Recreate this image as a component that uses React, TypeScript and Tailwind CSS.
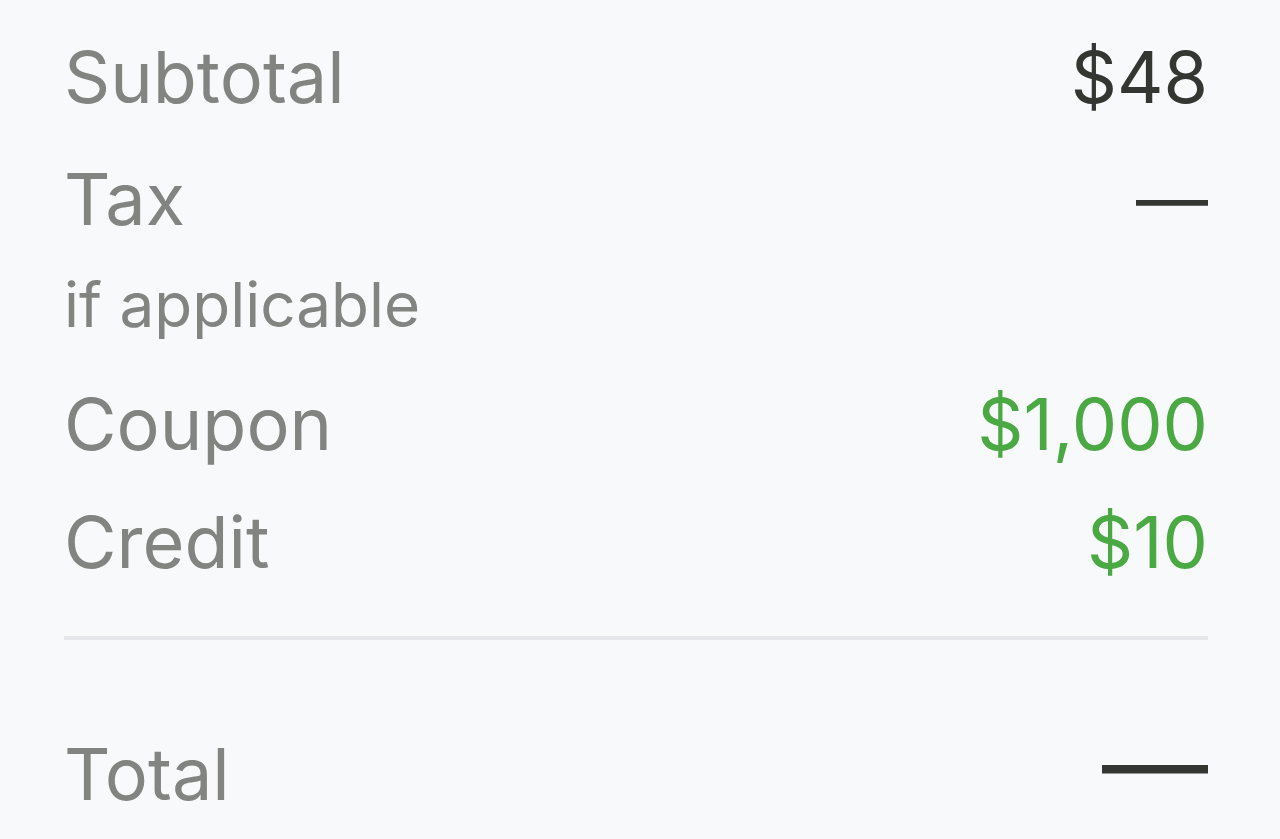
const rows = [
  { label: "Coupon", value: "$1,000" },
  { label: "Credit", value: "$10" },
];

export default function App() {
  return (
    <div className="min-h-screen w-full bg-[#f8f9fa] font-['Inter','Noto_Sans',sans-serif]">
      <div className="ml-16 mr-[72px] pt-[34px]">
        {/* Subtotal */}
        <div className="flex items-center justify-between text-[72px] leading-[86px]">
          <span className="text-[#818480]">Subtotal</span>
          <span className="text-[#343632]">$48</span>
        </div>

        {/* Tax */}
        <div className="mt-[36px] flex items-center justify-between text-[72px] leading-[86px]">
          <span className="text-[#818480]">Tax</span>
          <span className="text-[#343632]">—</span>
        </div>
        <div className="mt-[26px] text-[62px] leading-[74px] text-[#818480]">if applicable</div>

        {rows.map((r, i) => (
          <div
            key={r.label}
            className={
              "flex items-center justify-between text-[72px] leading-[86px] " +
              (i === 0 ? "mt-[39px]" : "mt-[32px]")
            }
          >
            <span className="text-[#818480]">{r.label}</span>
            <span className="text-[#4ba944]">{r.value}</span>
          </div>
        ))}

        <div className="mt-[51px] h-[4px] bg-[#e5e7ea]" />

        {/* Total */}
        <div className="mt-[91px] flex h-[86px] items-center justify-between text-[72px] leading-[86px]">
          <span className="text-[#818480]">Total</span>
          <span className="-mt-[20px] text-[106px] leading-[86px] text-[#343632]">—</span>
        </div>
      </div>
    </div>
  );
}
